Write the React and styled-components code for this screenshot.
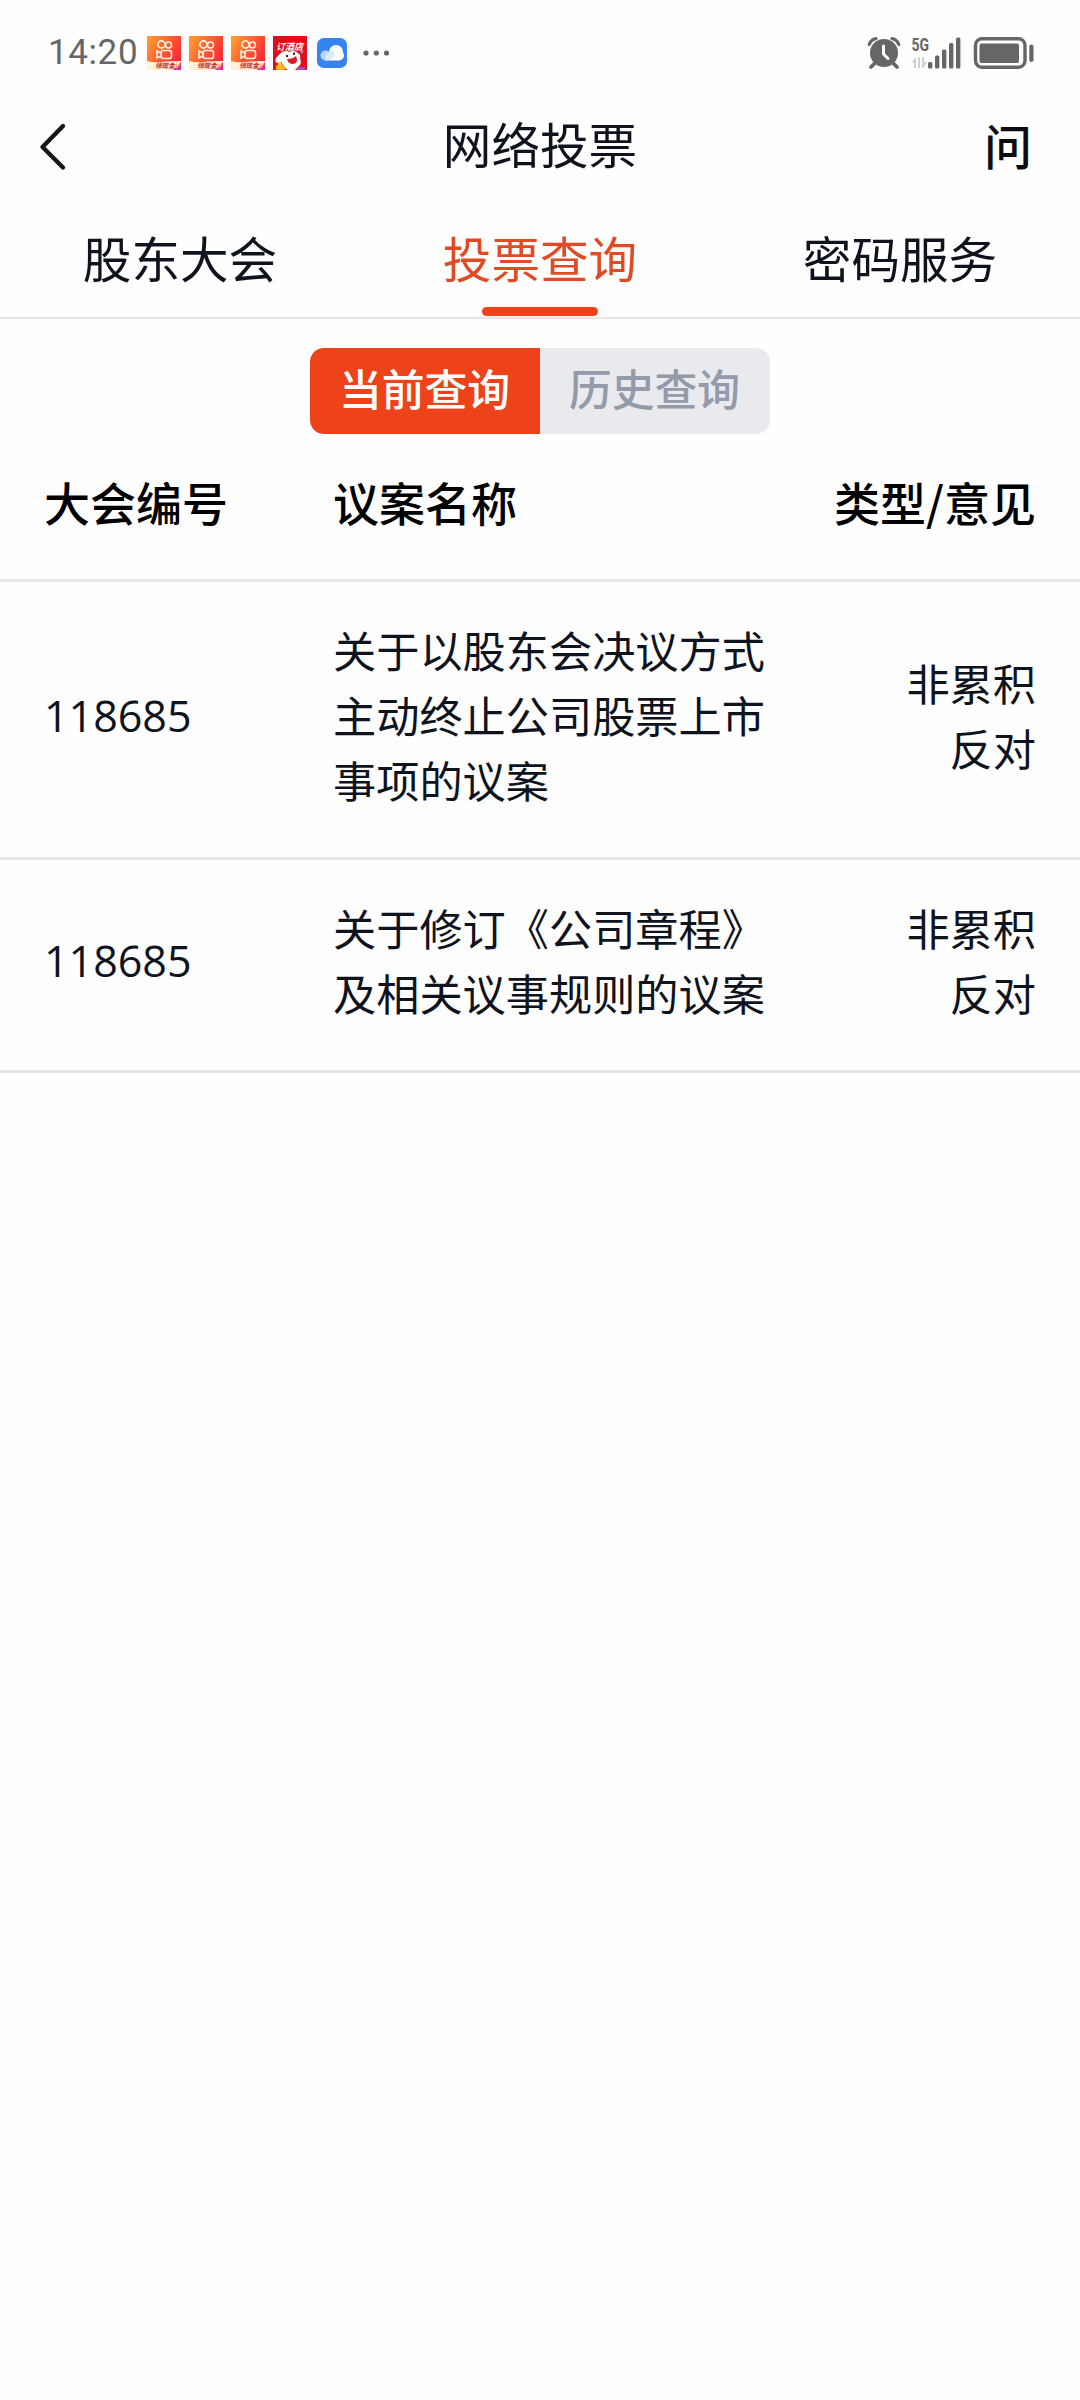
import React, { useState } from "react"
import styled, { createGlobalStyle } from "styled-components"

const GlobalStyle = createGlobalStyle`
	* {
		box-sizing: border-box;
	}
	body {
		margin: 0;
		background: #fefefe;
		color: #0e131d;
		font-family: "Noto Sans CJK SC", sans-serif;
	}
	button {
		border: none;
		padding: 0;
		background: none;
		font-family: inherit;
		cursor: pointer;
	}
	svg {
		overflow: visible;
	}
`

const Container = styled.div`
	width: 1080px;
	min-height: 2400px;
	background: #fefefe;
`

const StatusBar = styled.div`
	display: flex;
	align-items: center;
	justify-content: space-between;
	height: 104px;
	padding: 2px 46px 0 48px;
	color: #666666;
`

const StatusGroup = styled.div`
	display: flex;
	align-items: center;
`

const Clock = styled.span`
	width: 99px;
	font-family: Roboto, sans-serif;
	font-size: 35px;
	line-height: 40px;
	letter-spacing: 0.6px;
`

const AppIcons = styled.div`
	display: flex;
	align-items: center;
	gap: 8px;
`

const Header = styled.header`
	display: grid;
	grid-template-columns: 120px 1fr 120px;
	align-items: center;
	height: 84px;
`

const BackButton = styled.button`
	display: flex;
	padding-left: 37px;
`

const Title = styled.h1`
	margin: 0;
	padding-bottom: 6px;
	font-size: 48.6px;
	font-weight: 400;
	line-height: 72px;
	text-align: center;
`

const AskButton = styled.button`
	padding: 0 48px 5px 0;
	color: #0b0d12;
	font-size: 48px;
	font-weight: 500;
	line-height: 72px;
	text-align: right;
`

const Tabs = styled.nav`
	display: grid;
	grid-template-columns: repeat(3, 1fr);
	height: 131px;
	border-bottom: 2px solid #e6e6e6;
`

const Tab = styled.button`
	display: flex;
	flex-direction: column;
	align-items: center;
	justify-content: space-between;
	padding: 33px 0 1px;
	color: ${(props) => (props.$active ? "#e04a24" : "#0e131d")};
	font-size: 48.6px;
	line-height: 72px;

	&::after {
		content: "";
		width: 116px;
		height: 9px;
		border-radius: 5px;
		background: ${(props) => (props.$active ? "#ee421b" : "transparent")};
	}
`

const Segment = styled.div`
	display: flex;
	width: 460px;
	height: 86px;
	margin: 29px auto 0;
	border-radius: 14px;
	overflow: hidden;
`

const SegmentButton = styled.button`
	flex: 1;
	padding: 0 1px 9px 0;
	background: ${(props) => (props.$active ? "#ee421b" : "#e9eaee")};
	color: ${(props) => (props.$active ? "#ffffff" : "#939baa")};
	font-size: 42.8px;
	font-weight: 500;
	line-height: 64px;
`

const Row = styled.div`
	display: grid;
	grid-template-columns: 289px 436px 1fr;
	align-items: center;
	padding: 35px 44px 45px;
	border-bottom: 3px solid #e4e6ea;
	font-size: 43.2px;
	line-height: 65px;
`

const HeadRow = styled(Row)`
	padding: 33px 44px 44px;
	color: #000000;
	font-size: 46px;
	font-weight: 500;
	line-height: 68px;
`

const Code = styled.span`
	padding-top: 1px;
	font-family: "Open Sans", sans-serif;
	font-size: 43px;
`

const Opinion = styled.div`
	text-align: right;
`

const KuaishouIcon = ({ id }) => (
	<svg width='34' height='34' viewBox='0 0 34 34'>
		<defs>
			<linearGradient id={id} x1='0' y1='0.2' x2='1' y2='0.8'>
				<stop offset='0' stopColor='#ff9a33' />
				<stop offset='0.55' stopColor='#ff5130' />
				<stop offset='1' stopColor='#f3203c' />
			</linearGradient>
		</defs>
		<rect width='34' height='34' fill={`url(#${id})`} />
		<g fill='none' stroke='#fff3e2' strokeWidth='1.6'>
			<circle cx='14.5' cy='8.5' r='3.6' />
			<circle cx='21.5' cy='9' r='3' />
			<rect x='14' y='14.5' width='10.5' height='8' rx='2.4' />
			<path d='M14 17l-4-2v7l4-2' />
		</g>
		<path d='M0 25q6 2 14 1t20-1v9H0z' fill='#fff0d6' />
		<path d='M26 34l8-8v8z' fill='#e5279b' />
		<text x='8' y='32.2' fontSize='6.6' fontWeight='700' fontStyle='italic' fill='#c3281c'>
			领现金
		</text>
		<path d='M31 25l-4 5h3l-1 4 4-6h-3z' fill='#ffc46b' />
	</svg>
)

const HotelIcon = () => (
	<svg width='34' height='34' viewBox='0 0 34 34'>
		<rect width='34' height='34' fill='#e30d1c' />
		<text x='3' y='14' fontSize='9' fontWeight='700' fontStyle='italic' fill='#ffffff'>
			订酒店
		</text>
		<path
			d='M9 16q4-2 7 0 6-3 10 2 2 1 1 4 2 6-1 8l-4 4h-7q-6-3-6-8l-5 1q-5-3 5-11z'
			fill='#ffffff'
		/>
		<path d='M14 23q6 0 9-3 2 5 0 7-7 3-9-4z' fill='#d91b27' />
		<circle cx='14' cy='20' r='1.2' fill='#36262a' />
		<circle cx='21' cy='17.8' r='1.2' fill='#36262a' />
		<path d='M27 16l4-2-2 4z' fill='#87a9e8' />
		<rect x='3' y='29' width='9' height='5' rx='1.5' fill='#ffb31f' />
		<circle cx='7' cy='28' r='2' fill='#ffd23d' />
		<path d='M24 34v-3h8v3z' fill='#a548c9' />
	</svg>
)

const CloudIcon = () => (
	<svg width='34' height='34' viewBox='-1 -1 34 34'>
		<rect x='1' y='1' width='30' height='30' rx='7' fill='#3583ef' />
		<circle cx='20' cy='15' r='7' fill='#ffffff' />
		<circle cx='23' cy='18.5' r='5' fill='#ffffff' />
		<path d='M10 23.5h13v-6H10z' fill='#ffffff' />
		<circle cx='9.5' cy='18.5' r='5' fill='#b9d7fc' />
		<path d='M9.5 23.5q8 0 9-7-1-5-5-2.5-4 2.500-4 9.500z' fill='#dcebfe' />
	</svg>
)

const MoreIcon = styled.svg`
	margin-left: 6px;
`

const SystemIcons = () => (
	<svg width='167' height='34' viewBox='0 0 167 34' fill='#666666'>
		<circle cx='17' cy='17' r='14' />
		<g fill='none' stroke='#666666' strokeLinecap='round'>
			<path d='M2.2 8.5Q4 3.5 9 2.7M31.8 8.5Q30 3.5 25 2.7' strokeWidth='3.2' />
			<path d='M8 27l-4 4M26 27l4 4' strokeWidth='3.8' />
		</g>
		<path
			d='M16.500 10v8l4.500 4.500'
			fill='none'
			stroke='#fefefe'
			strokeWidth='3'
			strokeLinecap='round'
			strokeLinejoin='round'
		/>
		<text
			x='44.500'
			y='15'
			fontFamily='Roboto, sans-serif'
			fontSize='18'
			fontWeight='700'
			textLength='17.500'
			lengthAdjust='spacingAndGlyphs'
		>
			5G
		</text>
		<path d='M49 32V21l-4.500 5.500H47V32zM51 21h2v11h-2zM55 21h2v5h3l-3.500 6H55z' fill='#d2d2d2' />
		<rect x='61' y='26' width='4.4' height='6.5' rx='1.5' />
		<rect x='68' y='19.5' width='4.4' height='13' rx='1.5' />
		<rect x='75' y='13.5' width='4.4' height='19' rx='1.5' />
		<rect x='82' y='7' width='4.4' height='25.5' rx='1.5' />
		<rect x='89' y='1.5' width='4.4' height='31' rx='1.5' />
		<rect
			x='108.5'
			y='2.7'
			width='49.5'
			height='28.6'
			rx='6.5'
			fill='none'
			stroke='#666666'
			strokeWidth='3.4'
		/>
		<rect x='112.5' y='7.5' width='39.5' height='19.5' rx='2' />
		<rect x='162.3' y='8.5' width='4.2' height='17.5' rx='2' />
	</svg>
)

const tabs = ["股东大会", "投票查询", "密码服务"]
const segments = ["当前查询", "历史查询"]
const votes = [
	{
		code: "118685",
		name: "关于以股东会决议方式主动终止公司股票上市事项的议案",
		type: "非累积",
		opinion: "反对",
	},
	{
		code: "118685",
		name: "关于修订《公司章程》及相关议事规则的议案",
		type: "非累积",
		opinion: "反对",
	},
]

const App = () => {
	const [tab, setTab] = useState(1)
	const [segment, setSegment] = useState(0)
	return (
		<Container>
			<GlobalStyle />
			<StatusBar>
				<StatusGroup>
					<Clock>14:20</Clock>
					<AppIcons>
						<KuaishouIcon id='ks1' />
						<KuaishouIcon id='ks2' />
						<KuaishouIcon id='ks3' />
						<HotelIcon />
						<CloudIcon />
						<MoreIcon width='27' height='8' viewBox='0 0 27 8' fill='#666666'>
							<circle cx='3' cy='4' r='2.6' />
							<circle cx='13.3' cy='4' r='2.6' />
							<circle cx='23.5' cy='4' r='2.6' />
						</MoreIcon>
					</AppIcons>
				</StatusGroup>
				<SystemIcons />
			</StatusBar>
			<Header>
				<BackButton>
					<svg width='30' height='48' viewBox='0 0 30 48'>
						<path
							d='M26 4L5.500 25l20.500 20.500'
							fill='none'
							stroke='#14171b'
							strokeWidth='4.4'
							strokeLinecap='round'
							strokeLinejoin='round'
						/>
					</svg>
				</BackButton>
				<Title>网络投票</Title>
				<AskButton>问</AskButton>
			</Header>
			<Tabs>
				{tabs.map((label, i) => (
					<Tab key={label} $active={i === tab} onClick={() => setTab(i)}>
						{label}
					</Tab>
				))}
			</Tabs>
			<Segment>
				{segments.map((label, i) => (
					<SegmentButton key={label} $active={i === segment} onClick={() => setSegment(i)}>
						{label}
					</SegmentButton>
				))}
			</Segment>
			<HeadRow>
				<div>大会编号</div>
				<div>议案名称</div>
				<Opinion>类型/意见</Opinion>
			</HeadRow>
			{votes.map((vote) => (
				<Row key={vote.name}>
					<Code>{vote.code}</Code>
					<div>{vote.name}</div>
					<Opinion>
						<div>{vote.type}</div>
						<div>{vote.opinion}</div>
					</Opinion>
				</Row>
			))}
		</Container>
	)
}

export default App
